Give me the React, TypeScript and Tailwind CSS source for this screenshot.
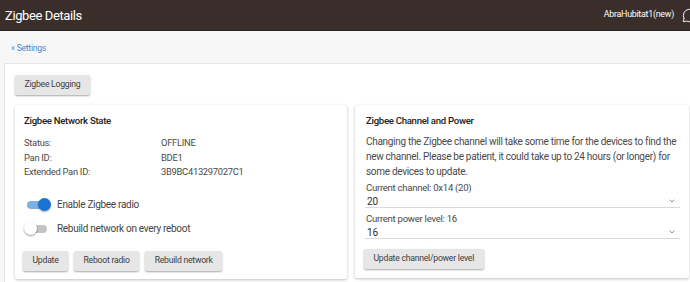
import React from 'react';
import { ChevronDown, MessageCircle } from 'lucide-react';

const Btn: React.FC<{ label: string }> = ({ label }) => (
  <button className="h-[20px] px-[9.5px] rounded-[2px] bg-[#e6e6e6] text-[8.7px] tracking-[-0.03em] text-[#404040] shadow-[0_1px_2px_rgba(0,0,0,0.35)] whitespace-nowrap">
    {label}
  </button>
);

const Toggle: React.FC<{ on: boolean; label: string }> = ({ on, label }) => (
  <div className="flex items-center h-[20px]">
    <div className="relative w-[20px] h-[8px] ml-[2px]">
      <div className={on ? 'w-full h-full rounded-full bg-[#7eb0e6]' : 'w-full h-full rounded-full bg-[#c4c4c4]'} />
      <div
        className={
          on
            ? 'absolute top-[-3px] right-[-4px] w-[13px] h-[13px] rounded-full bg-[#1a73d4] shadow-[0_1px_2px_rgba(0,0,0,0.3)]'
            : 'absolute top-[-3px] left-[-3px] w-[13px] h-[13px] rounded-full bg-white shadow-[0_1px_2px_rgba(0,0,0,0.4)]'
        }
      />
    </div>
    <span className="ml-[10px] text-[10px] tracking-[-0.03em] text-[#444]">{label}</span>
  </div>
);

const Select: React.FC<{ value: string }> = ({ value }) => (
  <div className="flex items-center justify-between h-[13px] border-b border-[#d9d9d9] pl-[2px] pr-[4px] text-[10px] text-[#2e2e2e]">
    <span>{value}</span>
    <ChevronDown size={8} strokeWidth={2} className="text-[#555]" />
  </div>
);

export default function App() {
  return (
    <div className="w-[690px] h-[282px] overflow-hidden bg-[#f7f7f7] font-['Roboto',sans-serif]">
      <header className="h-[31px] bg-[#3a2e2b] border-b border-[#2a201d] flex items-center pl-[5px]">
        <h1 className="text-[13px] tracking-[-0.03em] text-white leading-none">Zigbee Details</h1>
        <div className="ml-auto flex items-center mr-[-7px]">
          <span className="text-[8.9px] tracking-[-0.03em] text-white">AbraHubitat1(new)</span>
          <MessageCircle size={15} strokeWidth={1.5} className="ml-[8px] text-white" />
        </div>
      </header>

      <div className="h-[32px] flex items-center pl-[11px] pt-[2px]">
        <a className="text-[8.6px] tracking-[-0.03em] text-[#3b8ad8]">« Settings</a>
      </div>

      <div className="ml-[4px] w-[720px] bg-white border-l border-t border-[#e4e4e4] pt-[11px] pl-[10px] h-full">
        <div className="flex">
          <Btn label="Zigbee Logging" />
        </div>

        <div className="flex gap-[8px] mt-[10px]">
          <section className="w-[332px] h-[174px] bg-white rounded-[2px] shadow-[0_1px_3px_rgba(0,0,0,0.25)] pt-[8px] pl-[9px] pr-[8px]">
            <h2 className="text-[9.6px] tracking-[-0.03em] leading-[15px] font-medium text-[#212121]">Zigbee Network State</h2>
            <div className="mt-[8px] text-[9.4px] tracking-[-0.03em] leading-[14.5px] text-[#4a4a4a] grid grid-cols-[137px_1fr]">
              <span>Status:</span>
              <span>OFFLINE</span>
              <span>Pan ID:</span>
              <span>BDE1</span>
              <span>Extended Pan ID:</span>
              <span>3B9BC413297027C1</span>
            </div>
            <div className="mt-[15px] flex flex-col gap-[4px] pl-[1px]">
              <Toggle on label="Enable Zigbee radio" />
              <Toggle on={false} label="Rebuild network on every reboot" />
            </div>
            <div className="mt-[12px] flex gap-[6px] -ml-[1px]">
              <Btn label="Update" />
              <Btn label="Reboot radio" />
              <Btn label="Rebuild network" />
            </div>
          </section>

          <section className="w-[334px] h-[173px] bg-white rounded-[2px] shadow-[0_1px_3px_rgba(0,0,0,0.25)] pt-[8px] pl-[10px] pr-[9px]">
            <h2 className="text-[9.6px] tracking-[-0.03em] leading-[15px] font-medium text-[#212121] pl-[1px]">Zigbee Channel and Power</h2>
            <p className="mt-[6px] text-[10px] tracking-[-0.03em] leading-[15px] text-[#4a4a4a] pl-[1px]">
              Changing the Zigbee channel will take some time for the devices to find the new channel. Please be patient, it could take up to 24 hours (or longer) for some devices to update.
            </p>
            <div className="mt-[1px] text-[9.6px] tracking-[-0.03em] leading-[15px] text-[#4a4a4a] pl-[1px]">Current channel: 0x14 (20)</div>
            <Select value="20" />
            <div className="mt-[3px] text-[9.6px] tracking-[-0.03em] leading-[15px] text-[#4a4a4a] pl-[1px]">Current power level: 16</div>
            <Select value="16" />
            <div className="mt-[10px] -ml-[1px] flex">
              <Btn label="Update channel/power level" />
            </div>
          </section>
        </div>
      </div>
    </div>
  );
}
